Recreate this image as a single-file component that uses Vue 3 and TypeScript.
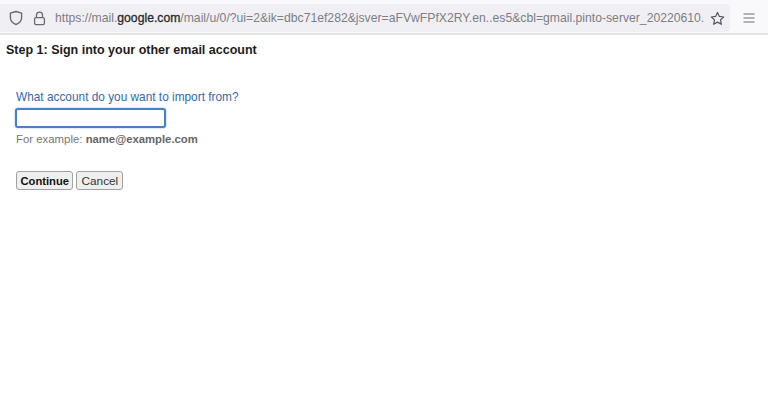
<script setup lang="ts">
const host = 'google.com'
</script>

<template>
  <div class="page">
    <div class="toolbar">
      <div class="urlbar">
        <svg class="ico shield" width="14" height="16" viewBox="0 0 14 16" fill="none">
          <path d="M7 1.5 L12.6 3.2 V7.5 C12.6 11 10 13.4 7 14.5 C4 13.4 1.4 11 1.4 7.5 V3.2 Z" stroke="#6a6a73" stroke-width="1.4" stroke-linejoin="round" />
        </svg>
        <svg class="ico lock" width="13" height="15" viewBox="0 0 13 15" fill="none">
          <path d="M3.5 6.5 V4.2 a3 3 0 0 1 6 0 V6.5" stroke="#6a6a73" stroke-width="1.3" />
          <rect x="1.6" y="6.6" width="9.8" height="7" rx="1.4" stroke="#6a6a73" stroke-width="1.3" />
        </svg>
        <div class="url">https://mail.<b>{{ host }}</b>/mail/u/0/?ui=2&amp;ik=dbc71ef282&amp;jsver=aFVwFPfX2RY.en..es5&amp;cbl=gmail.pinto-server_20220610.</div>
        <svg class="ico star" width="15" height="15" viewBox="0 0 16 16" fill="none">
          <path d="M8 1.6 L10 5.8 L14.6 6.4 L11.2 9.5 L12.1 14.2 L8 11.9 L3.9 14.2 L4.8 9.5 L1.4 6.4 L6 5.8 Z" stroke="#55555d" stroke-width="1.3" stroke-linejoin="round" />
        </svg>
      </div>
      <svg class="menu" width="12" height="10" viewBox="0 0 12 10" fill="none">
        <path d="M0.5 1 H11.5 M0.5 5 H11.5 M0.5 9 H11.5" stroke="#6a6a73" stroke-width="1.2" />
      </svg>
    </div>

    <div class="content">
      <h1>Step 1: Sign into your other email account</h1>
      <form class="form" @submit.prevent>
        <label for="acct">What account do you want to import from?</label>
        <input id="acct" type="text" />
        <p class="hint">For example: <b>name@example.com</b></p>
        <div class="actions">
          <button class="btn strong" type="button">Continue</button>
          <button class="btn" type="button">Cancel</button>
        </div>
      </form>
    </div>
  </div>
</template>

<style>
html, body { margin: 0; background: #fff; }
</style>

<style scoped>
.page {
  width: 768px; height: 408px; overflow: hidden;
  background: #fff;
  font-family: "Liberation Sans", Arial, sans-serif;
}
.toolbar {
  height: 35px; box-sizing: border-box;
  display: flex; align-items: center;
  background: #f9f9fb;
  border-bottom: 2px solid #e3e3e6;
  padding-top: 3px;
}
.urlbar {
  width: 730px; height: 28px; box-sizing: border-box;
  display: flex; align-items: center;
  background: #f0f0f4;
  border-radius: 0 4px 4px 0;
  padding-left: 9px;
}
.ico { flex: none; }
.lock { margin-left: 10px; }
.url {
  margin-left: 9px; width: 653px; flex: none;
  font-size: 12.2px; color: #7d7d85; white-space: nowrap; overflow: hidden;
}
.url b { font-weight: 400; color: #2a2a2a; -webkit-text-stroke: 0.3px #2a2a2a; }
.star { margin-left: 2px; }
.menu { margin-left: 13px; }

.content { padding: 7px 6px 0; }
h1 { margin: 0; font-size: 12.5px; line-height: 16px; font-weight: 700; color: #1c1c1c; }
.form { display: flex; flex-direction: column; align-items: flex-start; padding: 32px 0 0 10px; }
label { font-size: 11.85px; line-height: 14px; color: #3568b0; }
input {
  width: 151px; height: 20px; box-sizing: border-box;
  margin: 4px 0 0 -1px; padding: 0;
  background: #fff;
  border: 2px solid #4a7fca; border-radius: 3px;
  box-shadow: 0 0 2px rgba(74,127,202,0.6);
  outline: none;
}
.hint { margin: 4px 0 0; font-size: 11.4px; line-height: 14px; color: #777; }
.hint b { color: #666; font-size: 11.3px; }
.actions { display: flex; gap: 3px; margin-top: 25px; }
.btn {
  height: 19px; box-sizing: border-box; padding: 0 4px;
  font-family: inherit; font-size: 11.8px; color: #333;
  background: #efefef;
  border: 1px solid #a0a0a0; border-radius: 3px;
}
.btn.strong { font-weight: 700; font-size: 11.2px; padding: 0 3.5px; color: #111; }
</style>
